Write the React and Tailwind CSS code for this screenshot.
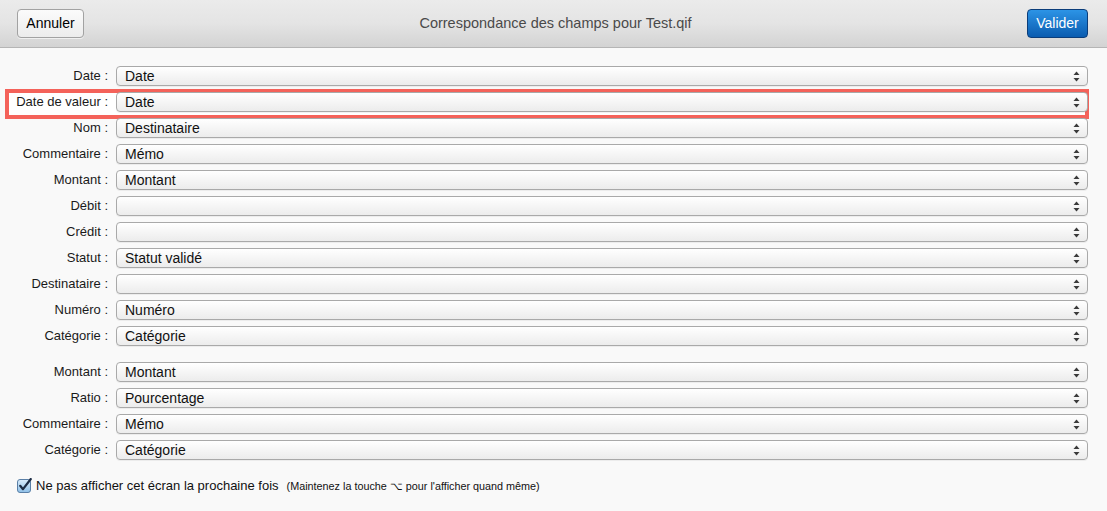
import React from "react";

const group1 = [
  { label: "Date", value: "Date" },
  { label: "Date de valeur", value: "Date", highlight: true },
  { label: "Nom", value: "Destinataire" },
  { label: "Commentaire", value: "Mémo" },
  { label: "Montant", value: "Montant" },
  { label: "Débit", value: "" },
  { label: "Crédit", value: "" },
  { label: "Statut", value: "Statut validé" },
  { label: "Destinataire", value: "" },
  { label: "Numéro", value: "Numéro" },
  { label: "Catégorie", value: "Catégorie" },
];

const group2 = [
  { label: "Montant", value: "Montant" },
  { label: "Ratio", value: "Pourcentage" },
  { label: "Commentaire", value: "Mémo" },
  { label: "Catégorie", value: "Catégorie" },
];

function Arrows() {
  return (
    <svg width="7" height="11" viewBox="0 0 7 11" className="shrink-0">
      <path d="M3.5 0.5 L6.5 4 L0.5 4 Z" fill="#3a3a3a" />
      <path d="M3.5 10.5 L6.5 7 L0.5 7 Z" fill="#3a3a3a" />
    </svg>
  );
}

function FieldRow({ label, value, highlight }) {
  return (
    <div className="relative flex items-center h-[20px]">
      {highlight && (
        <div className="absolute left-[5px] right-[18px] top-[-3px] bottom-[-7px] border-4 border-[#f4625a] bg-white"></div>
      )}
      <div className="relative w-[116px] shrink-0 pr-[8px] text-right text-[13px] text-[#1a1a1a]">
        {label} :
      </div>
      <div className="relative flex-1 mr-[19px] h-[20px] flex items-center justify-between rounded-[4px] border border-[#a9a9a9] bg-gradient-to-b from-white to-[#ececec] pl-[8px] pr-[7px] shadow-[0_1px_0_rgba(0,0,0,0.05)]">
        <span className="text-[14px] text-[#111]">{value}</span>
        <Arrows />
      </div>
    </div>
  );
}

export default function App() {
  return (
    <div className="w-[1107px] h-[511px] bg-[#f9f9f9] overflow-hidden" style={{ fontFamily: '"Liberation Sans", Arial, sans-serif' }}>
      <div className="h-[48px] flex items-center justify-between px-[17px] border-b border-[#b5b5b5] bg-gradient-to-b from-[#ebebeb] via-[#e4e4e4] to-[#d3d3d3]">
        <button className="h-[29px] w-[67px] rounded-[4px] border border-[#a2a2a2] bg-gradient-to-b from-[#fbfbfb] to-[#ececec] text-[14px] text-black shadow-[0_1px_0_rgba(255,255,255,0.6)]">
          Annuler
        </button>
        <div className="text-[14.5px] text-[#4a4a4a]">Correspondance des champs pour Test.qif</div>
        <button className="h-[29px] w-[61px] mr-[2px] rounded-[4px] border border-[#0b3d7a] bg-gradient-to-b from-[#2c94e6] to-[#0a5cb0] text-[14px] text-white">
          Valider
        </button>
      </div>

      <div className="pt-[18px]">
        <div className="flex flex-col gap-[6px]">
          {group1.map((r, i) => (
            <FieldRow key={i} {...r} />
          ))}
        </div>
        <div className="flex flex-col gap-[6px] mt-[16px]">
          {group2.map((r, i) => (
            <FieldRow key={i} {...r} />
          ))}
        </div>

        <div className="flex items-center mt-[16px] pl-[17px]">
          <svg width="15" height="15" viewBox="0 0 15 15" className="shrink-0">
            <defs>
              <linearGradient id="cb" x1="0" y1="0" x2="0" y2="1">
                <stop offset="0" stopColor="#d9ecfb" />
                <stop offset="1" stopColor="#8fc0e8" />
              </linearGradient>
            </defs>
            <rect x="0.5" y="1.5" width="13" height="13" rx="2.5" fill="url(#cb)" stroke="#5a7fa6" />
            <path d="M3.2 7.8 L6 11.2 L13.8 1" fill="none" stroke="#1c2c44" strokeWidth="2.2" strokeLinecap="round" strokeLinejoin="round" />
          </svg>
          <span className="ml-[4px] text-[13px] text-[#111]">Ne pas afficher cet écran la prochaine fois</span>
          <span className="ml-[8px] text-[10.8px] text-[#111]">(Maintenez la touche ⌥ pour l'afficher quand même)</span>
        </div>
      </div>
    </div>
  );
}
